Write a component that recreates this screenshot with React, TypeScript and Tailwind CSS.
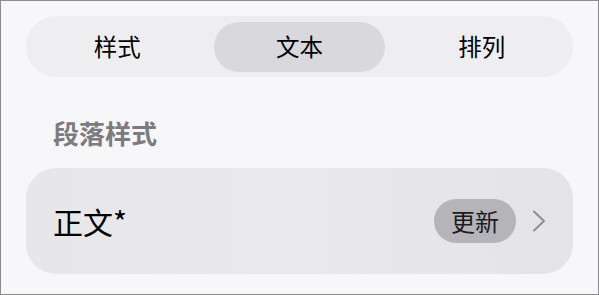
import React, { useState } from 'react';

const tabs = ['样式', '文本', '排列'];

const App: React.FC = () => {
  const [active, setActive] = useState(1);

  return (
    <div
      className="w-[599px] h-[295px] bg-[#f7f7f9] border border-[#8c8c8c] pl-[25px] pr-[25px] pt-[15px]"
      style={{ fontFamily: '"Noto Sans CJK SC", "Noto Sans", sans-serif' }}
    >
      {/* Segmented control */}
      <div className="h-[61px] rounded-full bg-[#eeeef0] px-[6px] py-[5.5px] grid grid-cols-3 gap-[12px]">
        {tabs.map((t, i) => (
          <button
            key={t}
            onClick={() => setActive(i)}
            className={`rounded-full flex items-center justify-center text-[23.5px] leading-none font-normal text-black ${
              active === i ? 'bg-[#d9d9dd]' : ''
            }`}
          >
            {t}
          </button>
        ))}
      </div>

      {/* Paragraph style */}
      <h2 className="mt-[43px] pl-[27px] text-[26px] leading-none font-semibold text-[#7b7b80]">段落样式</h2>

      <div className="mt-[22px] h-[106px] rounded-[30px] bg-gradient-to-r from-[#e7e7ea] via-[#e9e9ec] to-[#e4e4e7] px-[27px] flex items-center">
        <span className="text-[30px] leading-none font-normal text-black">正文*</span>
        <div className="ml-auto flex items-center gap-[16px]">
          <span className="h-[44px] w-[82px] rounded-full bg-[#b4b4b9] flex items-center justify-center text-[24px] leading-none font-normal text-[#1c1c1e]">
            更新
          </span>
          <svg width="14" height="22" viewBox="0 0 14 22" fill="none">
            <path d="M2 1.5 L12 11 L2 20.5" stroke="#8e8e93" strokeWidth="2" strokeLinecap="round" strokeLinejoin="round" />
          </svg>
        </div>
      </div>
    </div>
  );
};

export default App;
